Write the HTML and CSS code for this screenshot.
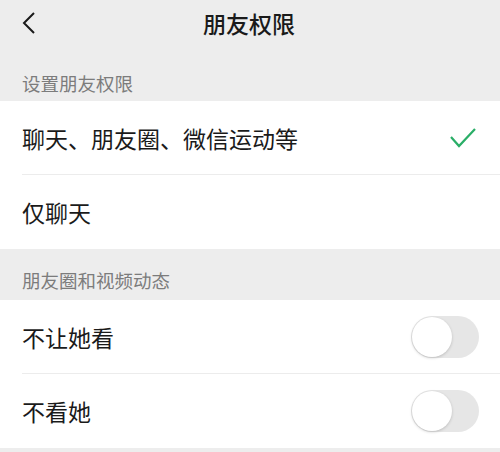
FILE: index.html
```html
<!DOCTYPE html>
<html lang="zh">
<head>
<meta charset="utf-8">
<link rel="stylesheet" href="styles.css">
</head>
<body>
<div class="page">
  <header class="nav">
    <svg class="back" width="14" height="22" viewBox="0 0 14 22"><polyline points="12,1 2,11 12,21" fill="none" stroke="#1a1a1a" stroke-width="2" stroke-linejoin="miter"/></svg>
    <div class="title">朋友权限</div>
  </header>
  <div class="label first">设置朋友权限</div>
  <div class="group">
    <div class="row">
      <span class="text">聊天、朋友圈、微信运动等</span>
      <svg class="check" width="28" height="22" viewBox="0 0 28 22"><polyline points="2,10 10,19 26,2" fill="none" stroke="#2aae67" stroke-width="2.2"/></svg>
    </div>
    <div class="row">
      <span class="text">仅聊天</span>
    </div>
  </div>
  <div class="label second">朋友圈和视频动态</div>
  <div class="group">
    <div class="row">
      <span class="text">不让她看</span>
      <span class="switch"><span class="knob"></span></span>
    </div>
    <div class="row">
      <span class="text">不看她</span>
      <span class="switch"><span class="knob"></span></span>
    </div>
  </div>
</div>
</body>
</html>
```
FILE: styles.css
```css
html, body {
  margin: 0;
  padding: 0;
  background: #ededed;
}
body {
  font-family: "Noto Sans CJK SC", "Noto Sans", sans-serif;
  color: #1a1a1a;
}
.page {
  width: 500px;
  height: 452px;
  overflow: hidden;
  background: #ededed;
}
.nav {
  height: 46px;
  display: flex;
  align-items: center;
  justify-content: center;
  position: relative;
}
.back {
  position: absolute;
  left: 22px;
  top: 12px;
}
.title {
  font-size: 23px;
  font-weight: 500;
  line-height: 23px;
  letter-spacing: 0px;
  margin-left: -2px;
}
.label {
  font-size: 18.5px;
  line-height: 19px;
  color: #7c7c7c;
  padding-left: 22px;
}
.label.first {
  padding-top: 28px;
  padding-bottom: 8px;
}
.label.second {
  padding-top: 22px;
  padding-bottom: 10px;
}
.group {
  background: #fff;
  padding-left: 22px;
}
.row {
  height: 74px;
  display: flex;
  align-items: center;
  justify-content: space-between;
  padding-right: 21px;
  box-sizing: border-box;
  border-bottom: 1px solid #ececec;
}
.row:last-child {
  border-bottom: none;
}
.group + .label.second {
}
.text {
  font-size: 23px;
  line-height: 24px;
}
.check {
  margin-right: 2px;
}
.switch {
  width: 68px;
  height: 42px;
  border-radius: 21px;
  background: #e6e6e6;
  display: flex;
  align-items: center;
  padding: 1px;
  box-sizing: border-box;
}
.knob {
  width: 40px;
  height: 40px;
  border-radius: 50%;
  background: #fff;
  box-shadow: 0 1px 3px rgba(0,0,0,0.18);
}
```
